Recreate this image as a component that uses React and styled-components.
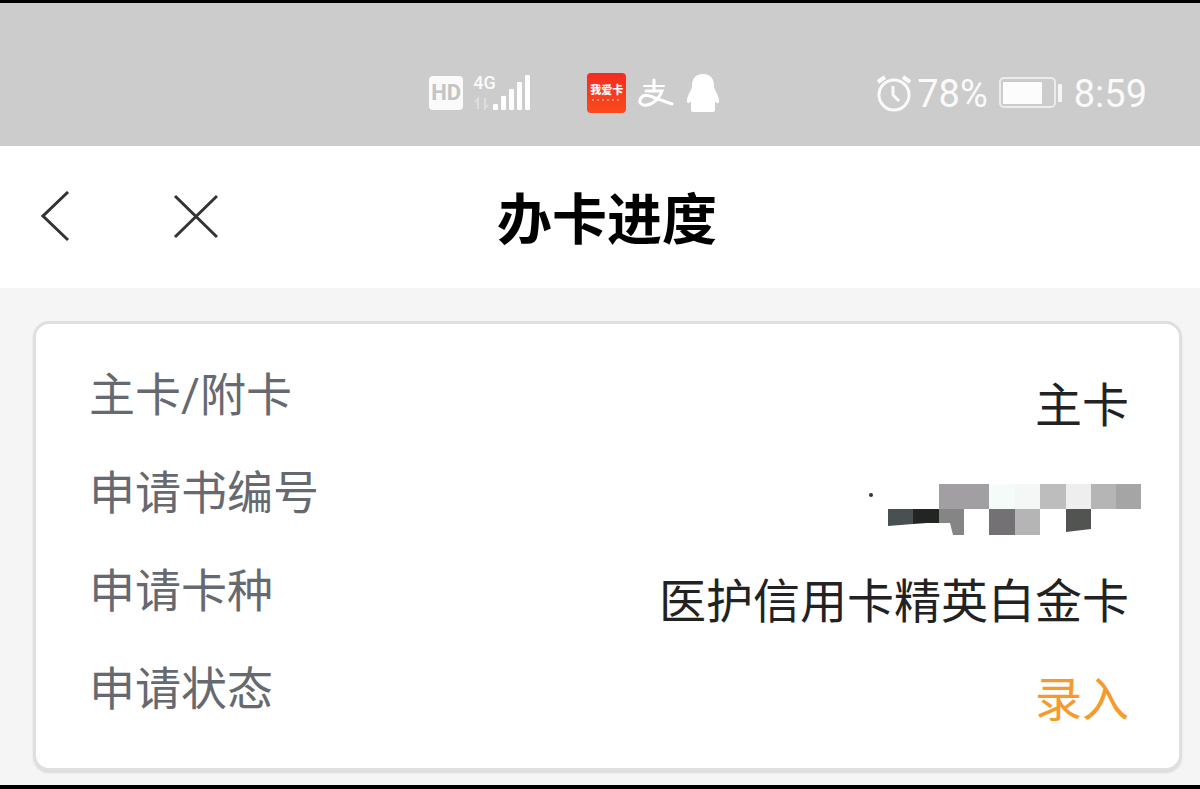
import styled, { createGlobalStyle } from "styled-components";

const details = [
    { label: "主卡/附卡", value: "主卡" },
    { label: "申请书编号", masked: true },
    { label: "申请卡种", value: "医护信用卡精英白金卡" },
    { label: "申请状态", value: "录入", highlight: true },
];

export default function App() {
    return (
        <>
            <GlobalStyle />
            <Page>
                <StatusBar />
                <NavBar>
                    <IconButton type="button" aria-label="返回">
                        <svg width="32" height="52" viewBox="0 0 32 52">
                            <path d="M28 1L3 25L28 49" />
                        </svg>
                    </IconButton>
                    <IconButton type="button" aria-label="关闭">
                        <svg width="46" height="46" viewBox="0 0 46 46">
                            <path d="M3 2L45 43M45 2L3 43" />
                        </svg>
                    </IconButton>
                    <Title>办卡进度</Title>
                </NavBar>
                <Content>
                    <Card>
                        {details.map((item) => (
                            <Row key={item.label}>
                                <Label>{item.label}</Label>
                                <Value $highlight={item.highlight}>
                                    {item.masked ? <MaskedNumber /> : item.value}
                                </Value>
                            </Row>
                        ))}
                    </Card>
                </Content>
            </Page>
        </>
    );
}

function StatusBar() {
    return (
        <Status>
            <Group $gap="10px">
                <HdBadge>HD</HdBadge>
                <Signal>
                    <Network>4G</Network>
                    <svg width="58" height="38" viewBox="0 0 58 38">
                        <g fill="#fff">
                            <rect x="20" y="30" width="5" height="6" rx="1" />
                            <rect x="28" y="22" width="5" height="14" rx="1" />
                            <rect x="36" y="15" width="5" height="21" rx="1" />
                            <rect x="44" y="8" width="5" height="28" rx="1" />
                            <rect x="52" y="1" width="5" height="35" rx="1" />
                        </g>
                        <path
                            d="M5 35V25L2 28M12 24V34L15 31"
                            fill="none"
                            stroke="#dedede"
                            strokeWidth="2"
                        />
                    </svg>
                </Signal>
            </Group>
            <Group $gap="12px">
                <AppIcon>
                    <strong>我爱卡</strong>
                    <svg width="30" height="3" viewBox="0 0 30 3">
                        <path d="M0 1H30" stroke="#ff9a80" strokeWidth="2" strokeDasharray="2 3" />
                    </svg>
                </AppIcon>
                <svg width="36" height="34" viewBox="0 0 36 34">
                    <g fill="none" stroke="#fff" strokeLinecap="round">
                        <path d="M16 4V14" strokeWidth="3" />
                        <path d="M6 10H26" strokeWidth="2" />
                        <path d="M8 15H24C22 21 16 28 9 29C3 30 0 26 3 22C6 18 12 19 17 22L34 28" strokeWidth="3" />
                    </g>
                </svg>
                <svg width="34" height="40" viewBox="0 0 34 40">
                    <path
                        d="M17 1C9 1 6 6 6 13C6 17 1 22 1 28C1 31 3 31 5 28C5 31 5 33 5 35V37Q5 39 8 39H26Q29 39 29 37V35C29 33 29 31 29 28C31 31 33 31 33 28C33 22 28 17 28 13C28 6 25 1 17 1Z"
                        fill="#fff"
                    />
                </svg>
            </Group>
            <Group $gap="5px">
                <svg width="36" height="38" viewBox="0 0 36 38">
                    <g fill="none" stroke="#fafafa" strokeWidth="3">
                        <circle cx="18" cy="21" r="15" />
                        <path d="M17 12V21L23 27" />
                        <path d="M2 8L9 3M34 8L27 3" strokeWidth="4" />
                    </g>
                </svg>
                <StatusText>78%</StatusText>
                <Battery>
                    <svg width="66" height="34" viewBox="0 0 66 34">
                        <rect x="2" y="2" width="55" height="29" rx="4" fill="none" stroke="#ececec" strokeWidth="2" />
                        <rect x="5" y="6" width="39" height="22" rx="1" fill="#fcfcfc" />
                        <rect x="60" y="8" width="4" height="18" rx="1" fill="#f6f6f6" />
                    </svg>
                </Battery>
                <StatusText>8:59</StatusText>
            </Group>
        </Status>
    );
}

function MaskedNumber() {
    return (
        <svg width="288" height="52" viewBox="0 0 288 52" role="img" aria-label="编号已隐藏">
            <circle cx="18" cy="12" r="2" fill="#333" />
            <path d="M86 1H136V26H86Z" fill="#a19fa1" />
            <path d="M136 1H162V26H136Z" fill="#f5fbf8" />
            <path d="M162 1H187V26H162Z" fill="#f5f6f6" />
            <path d="M187 1H213V26H187Z" fill="#bdbdbd" />
            <path d="M213 1H238V26H213Z" fill="#eeeeee" />
            <path d="M238 1H263V26H238Z" fill="#b5b5b5" />
            <path d="M263 1H289V26H263Z" fill="#a6a5a6" />
            <path d="M35 26H60V41L35 43Z" fill="#495052" />
            <path d="M60 26H86V40H74L60 41Z" fill="#232522" />
            <path d="M86 26H111V52H100L97 40H86Z" fill="#848584" />
            <path d="M136 26H162V52H136Z" fill="#737173" />
            <path d="M162 26H187V52H162Z" fill="#b5b5b5" />
            <path d="M213 26H238V46L213 49Z" fill="#525452" />
        </svg>
    );
}

const GlobalStyle = createGlobalStyle`
    * {
        box-sizing: border-box;
    }
    body {
        margin: 0;
        background-color: #f5f5f5;
        font-family: Roboto, "Noto Sans CJK SC", sans-serif;
    }
    svg {
        display: block;
        flex-shrink: 0;
    }
`;

const Page = styled.div`
    min-height: 100vh;
    display: flex;
    flex-direction: column;
    border-top: 3px solid #000;
    border-bottom: 4px solid #000;
`;

const Status = styled.header`
    display: flex;
    justify-content: flex-end;
    align-items: center;
    padding: 66px 53px 29px 0;
    background-color: #cccccc;
    color: #fafafa;
`;

const Group = styled.div`
    display: flex;
    align-items: center;
    gap: ${(props) => props.$gap};
    height: 48px;
    & + & {
        margin-left: 56px;
    }
    &:last-child {
        margin-left: 156px;
    }
`;

const HdBadge = styled.span`
    width: 34px;
    height: 34px;
    border-radius: 4px;
    background-color: #fafafa;
    color: #c4c4c4;
    font-size: 22px;
    font-weight: 700;
    line-height: 34px;
    text-align: center;
`;

const Signal = styled.div`
    position: relative;
`;

const Network = styled.span`
    position: absolute;
    top: 0;
    left: 0;
    font-size: 18px;
    font-weight: 500;
    line-height: 18px;
`;

const AppIcon = styled.div`
    width: 39px;
    height: 40px;
    display: flex;
    flex-direction: column;
    align-items: center;
    justify-content: center;
    gap: 2px;
    border-radius: 4px;
    background: linear-gradient(#f42b20, #fb4a1c);
    strong {
        font-size: 11px;
        line-height: 12px;
        font-weight: 900;
    }
`;

const StatusText = styled.span`
    padding-top: 2px;
    font-size: 38px;
    line-height: 48px;
`;

const Battery = styled.div`
    padding: 0 5px;
`;

const NavBar = styled.nav`
    position: relative;
    display: flex;
    align-items: center;
    gap: 100px;
    height: 142px;
    padding: 0 40px;
    background-color: #fff;
`;

const IconButton = styled.button`
    padding: 0;
    border: none;
    background: none;
    cursor: pointer;
    svg {
        fill: none;
        stroke: #333;
        stroke-width: 3px;
    }
`;

const Title = styled.h1`
    position: absolute;
    left: 0;
    right: 0;
    margin: 0;
    padding: 6px 0 0 14px;
    color: #000;
    font-size: 55px;
    font-weight: 700;
    line-height: 80px;
    text-align: center;
    pointer-events: none;
`;

const Content = styled.main`
    flex: 1;
    padding: 33px 18px 14px 33px;
`;

const Card = styled.dl`
    margin: 0;
    padding: 33px 50px 19px 53px;
    border: 3px solid #dfdfdf;
    border-radius: 16px;
    background-color: #fff;
    box-shadow: 0 2px 2px #dcdcdc;
`;

const Row = styled.div`
    display: flex;
    justify-content: space-between;
    height: 98px;
`;

const Label = styled.dt`
    color: #666a70;
    font-size: 46px;
    line-height: 76px;
`;

const Value = styled.dd`
    display: flex;
    align-items: center;
    margin: 0;
    color: ${(props) => (props.$highlight ? "#f79a2c" : "#222")};
    font-size: 47px;
    line-height: 98px;
    svg {
        margin: 10px -12px 0 0;
    }
`;
